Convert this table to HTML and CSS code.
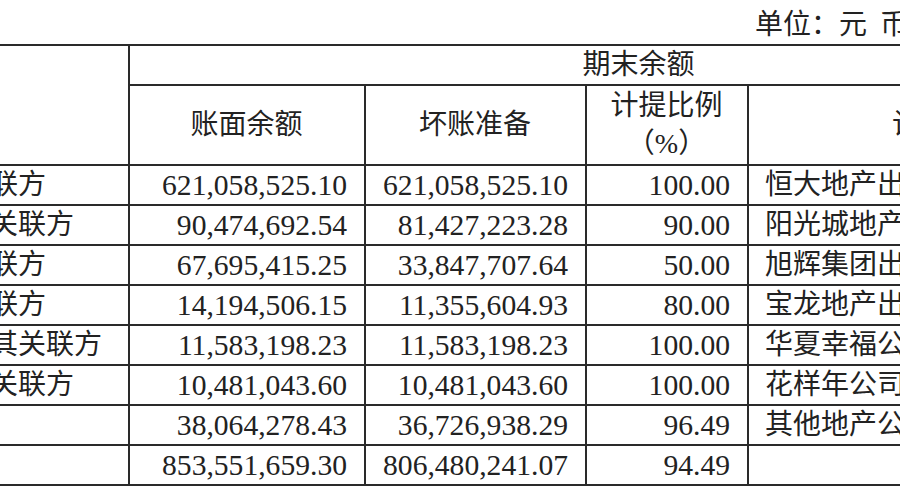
FILE: index.html
```html
<!DOCTYPE html>
<html lang="zh-CN">
<head>
<meta charset="utf-8">
<title>按欠款方归集的应收账款</title>
<link rel="stylesheet" href="styles.css">
</head>
<body>
<div class="sheet">
  <div class="unit">单位：元<span class="gap"></span>币种：人民币</div>
  <table class="grid">
    <colgroup>
      <col class="c-name">
      <col class="c-amt">
      <col class="c-bad">
      <col class="c-pct">
      <col class="c-why">
    </colgroup>
    <thead>
      <tr class="h1">
        <th rowspan="2" class="corner">单位名称</th>
        <th colspan="4" class="center">期末余额</th>
      </tr>
      <tr class="h2">
        <th class="center">账面余额</th>
        <th class="center">坏账准备</th>
        <th class="center two">计提比例<br>（%）</th>
        <th class="center">计提理由</th>
      </tr>
    </thead>
    <tbody>
      <tr><td class="name">恒大地产关联方</td><td class="num">621,058,525.10</td><td class="num">621,058,525.10</td><td class="num">100.00</td><td class="why">恒大地产出现债务逾期</td></tr>
      <tr><td class="name">阳光城地产关联方</td><td class="num">90,474,692.54</td><td class="num">81,427,223.28</td><td class="num">90.00</td><td class="why">阳光城地产出现债务逾期</td></tr>
      <tr><td class="name">旭辉集团关联方</td><td class="num">67,695,415.25</td><td class="num">33,847,707.64</td><td class="num">50.00</td><td class="why">旭辉集团出现债务逾期</td></tr>
      <tr><td class="name">宝龙地产关联方</td><td class="num">14,194,506.15</td><td class="num">11,355,604.93</td><td class="num">80.00</td><td class="why">宝龙地产出现债务逾期</td></tr>
      <tr><td class="name">华夏幸福及其关联方</td><td class="num">11,583,198.23</td><td class="num">11,583,198.23</td><td class="num">100.00</td><td class="why">华夏幸福公司出现债务逾期</td></tr>
      <tr><td class="name">花样年及其关联方</td><td class="num">10,481,043.60</td><td class="num">10,481,043.60</td><td class="num">100.00</td><td class="why">花样年公司出现债务逾期</td></tr>
      <tr><td class="name">其他</td><td class="num">38,064,278.43</td><td class="num">36,726,938.29</td><td class="num">96.49</td><td class="why">其他地产公司出现债务逾期</td></tr>
      <tr><td class="name">合计</td><td class="num">853,551,659.30</td><td class="num">806,480,241.07</td><td class="num">94.49</td><td class="why"></td></tr>
    </tbody>
  </table>
</div>
</body>
</html>
```
FILE: styles.css
```css
html, body {
  margin: 0;
  padding: 0;
  overflow: hidden;
  background: #ffffff;
}
body {
  font-family: "Liberation Serif", "Noto Sans CJK SC", serif;
  color: #222222;
}
.sheet {
  margin-left: -160px;
  width: 1308px;
}
.unit {
  height: 44px;
  box-sizing: border-box;
  padding: 8px 100px 0 0;
  text-align: right;
  font-size: 28px;
  line-height: 34px;
  white-space: nowrap;
}
.gap {
  display: inline-block;
  width: 13px;
}
.grid {
  border-collapse: collapse;
  table-layout: fixed;
  width: 1308px;
}
.c-name { width: 288px; }
.c-amt { width: 236px; }
.c-bad { width: 221px; }
.c-pct { width: 162px; }
.c-why { width: 401px; }
.grid th,
.grid td {
  border: 2px solid #2a2a2a;
  padding: 0 17px 0 16px;
  font-weight: normal;
  font-size: 28px;
  line-height: 34px;
  white-space: nowrap;
  overflow: hidden;
  vertical-align: middle;
}
.grid tbody tr { height: 40px; }
.grid .h1 { height: 40px; }
.grid .h2 { height: 80px; }
.grid .corner { color: transparent; }
.grid .center { text-align: center; }
.grid .two { line-height: 38px; }
.grid .name { text-align: left; padding-left: 8px; }
.grid .num { text-align: right; font-size: 29.6px; }
.grid .why { text-align: left; }
```
